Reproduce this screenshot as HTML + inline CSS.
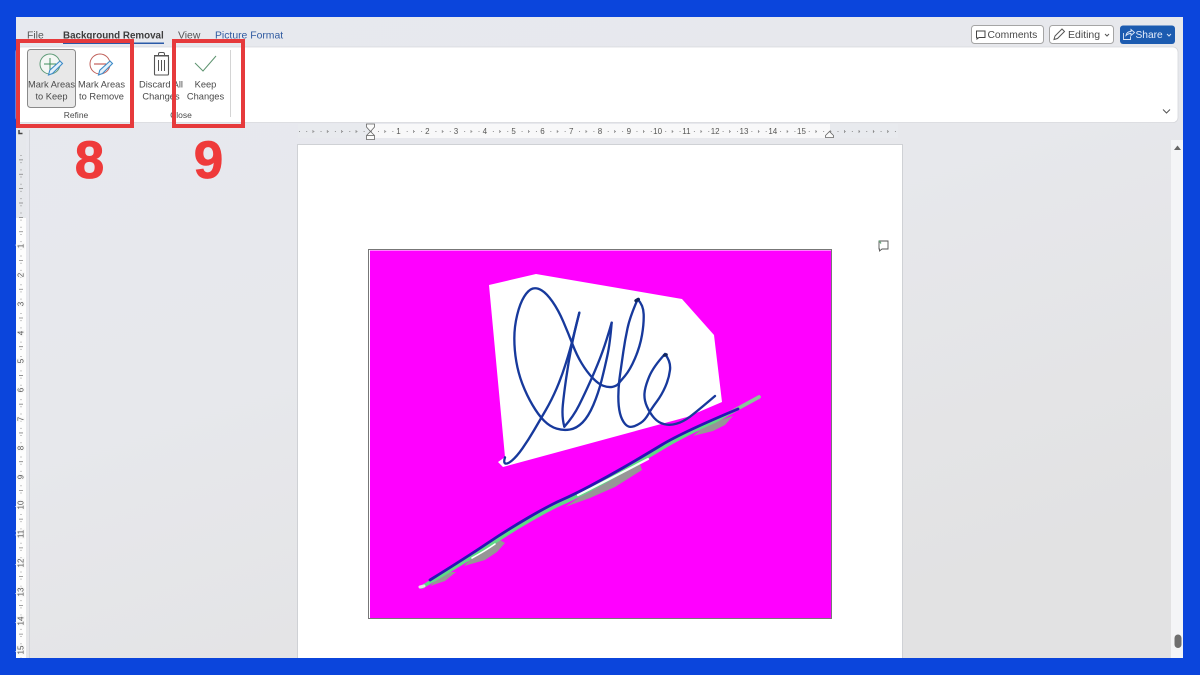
<!DOCTYPE html>
<html lang="en">
<head>
<meta charset="utf-8">
<title>Background Removal</title>
<style>
html,body{margin:0;padding:0;width:1200px;height:675px;overflow:hidden;background:#0b45dc}
svg{display:block;position:absolute;left:0;top:0;filter:blur(.3px)}
text{font-family:"Liberation Sans",sans-serif}
.r{font-size:9.3px;fill:#4a4a4a;text-anchor:middle}
.t{font-size:10.4px;fill:#555}
.n{font-size:8px;fill:#555;text-anchor:middle;stroke:#f8f8f8;stroke-width:3px;paint-order:stroke}
</style>
</head>
<body>
<svg width="1200" height="675" viewBox="0 0 1200 675" xmlns="http://www.w3.org/2000/svg">
<defs>
<linearGradient id="bg" x1="0" y1="0" x2="0.6" y2="1">
<stop offset="0" stop-color="#e7e9ef"/><stop offset="0.5" stop-color="#e7e8ec"/><stop offset="1" stop-color="#e2e2e3"/>
</linearGradient>
</defs>
<rect width="1200" height="675" fill="#0b45dc"/>
<rect x="16" y="17" width="1167" height="641" fill="url(#bg)"/>

<!-- tabs -->
<text class="t" x="27" y="38.500">File</text>
<text class="t" x="63" y="38.500" style="font-weight:bold;fill:#3d3d3d;font-size:9.8px">Background Removal</text>
<rect x="63" y="42.500" width="101" height="1.500" fill="#2b5aa8"/>
<text class="t" x="178" y="38.500">View</text>
<text class="t" x="215" y="38.500" style="fill:#2f5aa0">Picture Format</text>

<!-- top right buttons -->
<rect x="971.500" y="25.500" width="72" height="18" rx="3" fill="#fff" stroke="#a5a5a5"/>
<path d="M976.500 31h8.500v6.500h-6l-2 1.500v-1.500h-.5z" fill="none" stroke="#444" stroke-width="1"/>
<text class="t" x="987.500" y="38" style="font-size:10.300px;fill:#4a4a4a">Comments</text>
<rect x="1049.500" y="25.500" width="64" height="18" rx="3" fill="#fff" stroke="#a5a5a5"/>
<path d="M1054 39.500l1-3.500 7-7 2.500 2.500-7 7z" fill="none" stroke="#555" stroke-width="1"/>
<text class="t" x="1068" y="38" style="font-size:10.500px;fill:#4a4a4a">Editing</text>
<path d="M1105 34l2 2 2-2" fill="none" stroke="#555"/>
<rect x="1120" y="25.500" width="55" height="18.500" rx="3" fill="#1c5bb0"/>
<path d="M1123.500 33v6.500h7v-3M1126 35.500c.5-3 2.500-4 5-4v-2l3.500 3-3.500 3v-2c-2 0-3.500 .5-5 2z" fill="none" stroke="#dbe6f7" stroke-width=".9"/>
<text x="1135.500" y="38" style="font-size:10.200px;fill:#e6eefb">Share</text>
<path d="M1167 34l2 2 2-2" fill="none" stroke="#dbe6f7"/>

<!-- ribbon -->
<rect x="16" y="47" width="1162" height="75.500" rx="5" fill="#fff" stroke="#d6d7dc" stroke-width=".8"/>
<path d="M1163 109.500l3.500 3.500 3.500-3.500" fill="none" stroke="#555" stroke-width="1"/>

<!-- Mark Areas to Keep -->
<rect x="27.500" y="49.500" width="48" height="58" rx="3" fill="#e8e8e8" stroke="#8a8a8a"/>
<circle cx="50" cy="64" r="10" fill="#f4f7f4" stroke="#5f9b78" stroke-width="1"/>
<path d="M50 58v12M44 64h12" stroke="#3f8f5c" stroke-width="1"/>
<path d="M48.500 75l1.300-4.800 10.200-9.200 2.500 2.500-10 10z" fill="#e3f0fa" stroke="#3e8bc7" stroke-width="1.100"/>
<text class="r" x="51.500" y="87.500">Mark Areas</text>
<text class="r" x="51.500" y="99.500">to Keep</text>

<!-- Mark Areas to Remove -->
<circle cx="100" cy="64" r="10" fill="#fff" stroke="#c0605a" stroke-width="1"/>
<path d="M94 64h12" stroke="#c0504a" stroke-width="1.100"/>
<path d="M98.500 75l1.300-4.800 10.200-9.200 2.500 2.500-10 10z" fill="#e3f0fa" stroke="#3e8bc7" stroke-width="1.100"/>
<text class="r" x="101.500" y="87.500">Mark Areas</text>
<text class="r" x="101.500" y="99.500">to Remove</text>
<text class="r" x="76" y="118" style="font-size:8.500px">Refine</text>

<!-- Discard -->
<path d="M154 55.500h15M158.500 55.500v-1.500c0-1 .5-1.500 1.500-1.500h3c1 0 1.500 .5 1.500 1.500v1.500" fill="none" stroke="#555" stroke-width="1"/>
<rect x="154.500" y="56" width="14" height="19" rx="1" fill="#fff" stroke="#555" stroke-width="1.100"/>
<path d="M158.500 60v11M161.500 60v11M164.500 60v11" stroke="#555" stroke-width="1"/>
<text class="r" x="161" y="87.500">Discard All</text>
<text class="r" x="161" y="99.500">Changes</text>

<!-- Keep -->
<path d="M195 63l8 8 13-15" fill="none" stroke="#5e9470" stroke-width="1"/>
<text class="r" x="205.500" y="87.500">Keep</text>
<text class="r" x="205.500" y="99.500">Changes</text>
<text class="r" x="181" y="118" style="font-size:8.500px">Close</text>
<path d="M230.500 50v67" stroke="#d4d4d4"/>

<!-- horizontal ruler -->
<rect x="298" y="124" width="600" height="14" fill="#e8eaee"/>
<rect x="371" y="124" width="459" height="14" fill="#f8f8f9"/>
<g stroke="#777" fill="none">
<line x1="299" y1="131.500" x2="896" y2="131.500" stroke-dasharray="1 6.180" opacity=".75"/>
<line x1="312.500" y1="131.500" x2="896" y2="131.500" stroke-width="3" stroke-dasharray="0.800 13.570" opacity=".8"/>
</g>
<g>
<text class="n" x="398.500" y="134">1</text><text class="n" x="427.300" y="134">2</text><text class="n" x="456" y="134">3</text><text class="n" x="484.800" y="134">4</text><text class="n" x="513.600" y="134">5</text><text class="n" x="542.500" y="134">6</text><text class="n" x="571.200" y="134">7</text><text class="n" x="600" y="134">8</text><text class="n" x="628.800" y="134">9</text><text class="n" x="657.600" y="134">10</text><text class="n" x="686.400" y="134">11</text><text class="n" x="715.200" y="134">12</text><text class="n" x="744" y="134">13</text><text class="n" x="772.800" y="134">14</text><text class="n" x="801.500" y="134">15</text>
</g>
<path d="M366.500 124h8v3l-4 4.500-4-4.500zM370.500 131.500l4 4v4h-8v-4z" fill="#fbfbfb" stroke="#666" stroke-width=".8"/>
<path d="M366.500 135.500h8" stroke="#666" stroke-width=".8"/>
<path d="M825.500 135.500l4-4 4 4v2h-8z" fill="#fbfbfb" stroke="#666" stroke-width=".8"/>

<!-- vertical ruler -->
<rect x="16" y="130" width="10" height="88" fill="#e6e8ec"/>
<rect x="16" y="218" width="10" height="440" fill="#fdfdfd"/>
<path d="M29.500 130v528" stroke="#d3d5da" stroke-width="1"/>
<path d="M19 130v3.500h3.500" fill="none" stroke="#444" stroke-width="1.500"/>
<g stroke="#666">
<line x1="21" y1="155" x2="21" y2="658" stroke-dasharray="1 6.180" opacity=".7"/>
<line x1="21" y1="159.500" x2="21" y2="658" stroke-width="4" stroke-dasharray=".8 13.570" opacity=".8"/>
</g>
<g>
<text class="n" transform="translate(23.500,246) rotate(-90)">1</text><text class="n" transform="translate(23.500,275) rotate(-90)">2</text><text class="n" transform="translate(23.500,304) rotate(-90)">3</text><text class="n" transform="translate(23.500,333) rotate(-90)">4</text><text class="n" transform="translate(23.500,361) rotate(-90)">5</text><text class="n" transform="translate(23.500,390) rotate(-90)">6</text><text class="n" transform="translate(23.500,419) rotate(-90)">7</text><text class="n" transform="translate(23.500,448) rotate(-90)">8</text><text class="n" transform="translate(23.500,477) rotate(-90)">9</text><text class="n" transform="translate(23.500,505) rotate(-90)">10</text><text class="n" transform="translate(23.500,534) rotate(-90)">11</text><text class="n" transform="translate(23.500,563) rotate(-90)">12</text><text class="n" transform="translate(23.500,592) rotate(-90)">13</text><text class="n" transform="translate(23.500,621) rotate(-90)">14</text><text class="n" transform="translate(23.500,650) rotate(-90)">15</text>
</g>

<!-- scrollbar -->
<rect x="1171" y="140" width="12" height="518" fill="#f4f5f7"/>
<path d="M1174 150l3.500-4.500 3.500 4.500z" fill="#666"/>
<rect x="1174.500" y="634.500" width="7" height="13.500" rx="3.500" fill="#6f6f6f"/>

<!-- page -->
<rect x="297.500" y="144.500" width="605" height="520" fill="#fff" stroke="#cfd1d5"/>
<path d="M879 241h9v8h-6l-2.500 2v-2h-.5z" fill="#fff" stroke="#555" stroke-width=".9"/>
<path d="M879 240.500l2 3" stroke="#6aa07a" stroke-width="1.200"/>

<!-- picture -->
<rect x="368.500" y="249.500" width="463" height="369" fill="#fff" stroke="#777"/>
<rect x="370" y="250.500" width="461" height="367.500" fill="#ff00ff"/>
<polygon points="489,285 536,274 682,299 714,335 722,402 687,417 503,467 498,462 505,457" fill="#fff"/>

<!-- signature -->
<g transform="translate(470,260) scale(.33333)" fill="none" stroke-linecap="round" stroke-linejoin="round" stroke="#17399c" stroke-width="7">
<path d="M105 592Q100 608 106 610.500Q112 613 126 601.500Q140 590 157.500 565Q175 540 192.500 510Q210 480 227.500 450Q245 420 260 385Q275 350 287.500 310Q300 270 307.500 240Q315 210 328 158"/>
<path d="M328 158Q312 220 303.500 265Q295 310 288.500 355Q282 400 278.500 435Q275 470 283 500"/>
<path d="M283 500Q310 470 327.500 435Q345 400 365 355Q385 310 397.500 275Q410 240 425 188"/>
<path d="M425 188Q420 250 412.500 285Q405 320 395 360Q385 400 370 435Q355 470 337.500 487.500Q320 505 300 508.500Q280 512 260 506Q240 500 222.500 482.500Q205 465 187.500 435Q170 405 157.500 372.500Q145 340 139 305Q133 270 133 235Q133 200 141.500 165Q150 130 162.500 110Q175 90 187.500 86Q200 82 215 91Q230 100 247.500 125Q265 150 280 185Q295 220 307.500 252.500Q320 285 335 310Q350 335 367.500 353.500Q385 372 400 377.500Q415 383 427.500 380.500Q440 378 445 371.500Q450 365 465 347.500Q480 330 495 295Q510 260 516 225Q522 190 521 162.500Q520 135 503 118"/>
<path d="M503 118Q480 170 472.500 205Q465 240 460 275Q455 310 450 345Q445 380 445 410Q445 440 450 460Q455 480 465 491.500Q475 503 487.500 500Q500 497 512.500 488.500Q525 480 535 462.500Q545 445 560 425Q575 405 586 380Q597 355 600 330Q603 305 585 282"/>
<path d="M585 282Q550 320 537.500 350Q525 380 523.500 400Q522 420 531 440Q540 460 552.500 474Q565 488 582.500 492.500Q600 497 620 491Q640 485 660 470Q680 455 735 408"/>
<path d="M498 122l7-4" stroke="#10255e" stroke-width="10"/>
<path d="M583 286l6-2" stroke="#10255e" stroke-width="9"/>
</g>

<!-- strokes line -->
<g fill="none" stroke-linecap="round" stroke-linejoin="round">
<g fill="#969696" stroke="none">
<polygon points="430,586 445,581 456,572 450,572 436,580"/>
<polygon points="464,566 485,560 497,552 505,543 500,540 472,557"/>
<polygon points="565,507 590,498 615,487 642,470 640,464 590,490"/>
<polygon points="693,436 713,431 725,425 733,416 720,420 700,430"/>
</g>
<path d="M422 587Q467 560.500 487 547Q507 533.500 528.500 521Q550 508.500 561.500 503.500Q573 498.500 590 489.500Q607 480.500 623.500 471Q640 461.500 661.500 448.500Q683 435.500 715 421Q735 410 759 397" stroke="#5fdc85" stroke-width="3.600"/>
<path d="M578 495Q600 484 648 459" stroke="#f4fff6" stroke-width="2.200"/>
<path d="M472 558Q485 551 495 544" stroke="#fff" stroke-width="1.600"/>
<path d="M735 410L759 397" stroke="#8cc39a" stroke-width="3.500"/>
<path d="M430 580Q467 557 487 543.500Q507 530 528.500 517.500Q550 505 561.500 500Q573 495 590 486Q607 477 623.500 467.500Q640 458 661.500 445Q683 432 738 409" stroke="#2a14b4" stroke-width="2.800"/>
<path d="M420 587l4-1" stroke="#e4e4e4" stroke-width="3"/>
</g>

<!-- red annotation boxes -->
<rect x="18" y="41" width="114" height="85" fill="none" stroke="#e63a3c" stroke-width="4"/>
<rect x="174" y="41" width="69" height="85" fill="none" stroke="#e63a3c" stroke-width="4"/>
<text x="89.500" y="178" text-anchor="middle" style="font-weight:bold;font-size:53px;fill:#ef3a3a;stroke:#ef3a3a;stroke-width:.8px">8</text>
<text x="208.500" y="178" text-anchor="middle" style="font-weight:bold;font-size:53px;fill:#ef3a3a;stroke:#ef3a3a;stroke-width:.8px">9</text>

<!-- bottom border -->
<rect x="0" y="658" width="1200" height="17" fill="#0b45dc"/>
</svg>
</body>
</html>
